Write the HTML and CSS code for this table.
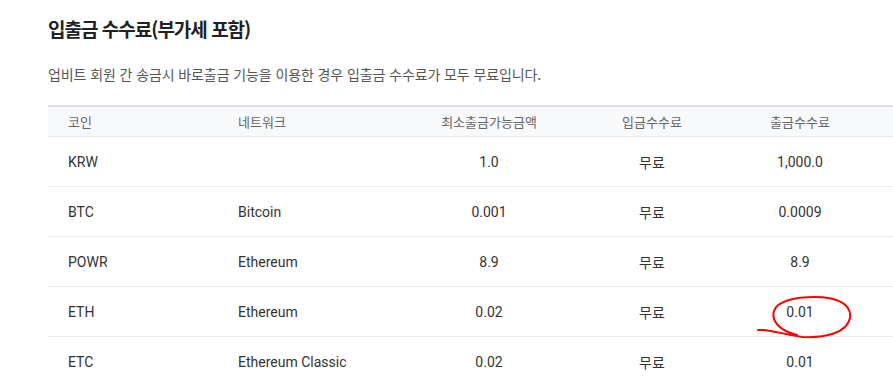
FILE: index.html
```html
<!DOCTYPE html>
<html lang="ko">
<head>
<meta charset="utf-8">
<link rel="stylesheet" href="styles.css">
</head>
<body>
<div class="page">
  <h2 class="title">입출금 수수료(부가세 포함)</h2>
  <p class="desc">업비트 회원 간 송금시 바로출금 기능을 이용한 경우 입출금 수수료가 모두 무료입니다.</p>
  <div class="table-wrap">
    <table class="fee">
      <colgroup>
        <col class="c1"><col class="c2"><col class="c3"><col class="c4"><col class="c5"><col class="c6">
      </colgroup>
      <thead>
        <tr><th class="l">코인</th><th class="l">네트워크</th><th>최소출금가능금액</th><th>입금수수료</th><th>출금수수료</th><th></th></tr>
      </thead>
      <tbody>
        <tr><td class="l">KRW</td><td class="l"></td><td>1.0</td><td class="ko">무료</td><td>1,000.0</td><td></td></tr>
        <tr><td class="l">BTC</td><td class="l">Bitcoin</td><td>0.001</td><td class="ko">무료</td><td>0.0009</td><td></td></tr>
        <tr><td class="l">POWR</td><td class="l">Ethereum</td><td>8.9</td><td class="ko">무료</td><td>8.9</td><td></td></tr>
        <tr><td class="l">ETH</td><td class="l">Ethereum</td><td>0.02</td><td class="ko">무료</td><td>0.01</td><td></td></tr>
        <tr><td class="l">ETC</td><td class="l">Ethereum Classic</td><td>0.02</td><td class="ko">무료</td><td>0.01</td><td></td></tr>
      </tbody>
    </table>
  </div>
  <svg class="mark" width="100" height="48" viewBox="0 0 100 48">
    <path d="M3 37 C 15 36, 30 42, 48 44 C 70 45, 92 40, 95 25 C 97 10, 80 4, 60 4 C 40 4, 22 8, 19 18 C 16 28, 25 38, 42 42" fill="none" stroke="#ff0000" stroke-width="2" stroke-linecap="round"/>
  </svg>
</div>
</body>
</html>
```
FILE: styles.css
```css
html, body {
  margin: 0;
  padding: 0;
  background: #fff;
}
body {
  font-family: Roboto, "Noto Sans CJK KR", sans-serif;
  color: #333;
  overflow: hidden;
}
.page {
  position: relative;
  padding: 17px 0 0 48px;
  width: 845px;
  overflow: hidden;
}
.title {
  margin: 0;
  font-family: "Noto Sans CJK KR", sans-serif;
  font-size: 19px;
  font-weight: 700;
  line-height: 24px;
  color: #222;
  letter-spacing: -1px;
}
.desc {
  margin: 24px 0 0;
  font-family: "Noto Sans CJK KR", sans-serif;
  font-size: 14px;
  line-height: 18px;
  color: #555;
  letter-spacing: -0.1px;
}
.table-wrap {
  margin-top: 22px;
  width: 845px;
  overflow: hidden;
}
.fee {
  width: 900px;
  border-collapse: collapse;
  table-layout: fixed;
  border-top: 2px solid #dfe0e3;
}
.c1 { width: 170px; }
.c2 { width: 182px; }
.c3 { width: 178px; }
.c4 { width: 148px; }
.c5 { width: 148px; }
.c6 { width: 74px; }
.fee th {
  height: 29px;
  padding: 0;
  background: #f8f9fb;
  font-family: "Noto Sans CJK KR", sans-serif;
  font-size: 13px;
  font-weight: 400;
  color: #666;
  text-align: center;
  border-bottom: 1px solid #e9eaec;
}
.fee td {
  height: 49px;
  padding: 0;
  font-size: 14px;
  color: #333;
  text-align: center;
  border-bottom: 1px solid #ececec;
}
.fee td.ko {
  font-family: "Noto Sans CJK KR", sans-serif;
}
.fee .l {
  text-align: left;
  padding-left: 20px;
}
.mark {
  position: absolute;
  left: 755px;
  top: 293px;
}
```
